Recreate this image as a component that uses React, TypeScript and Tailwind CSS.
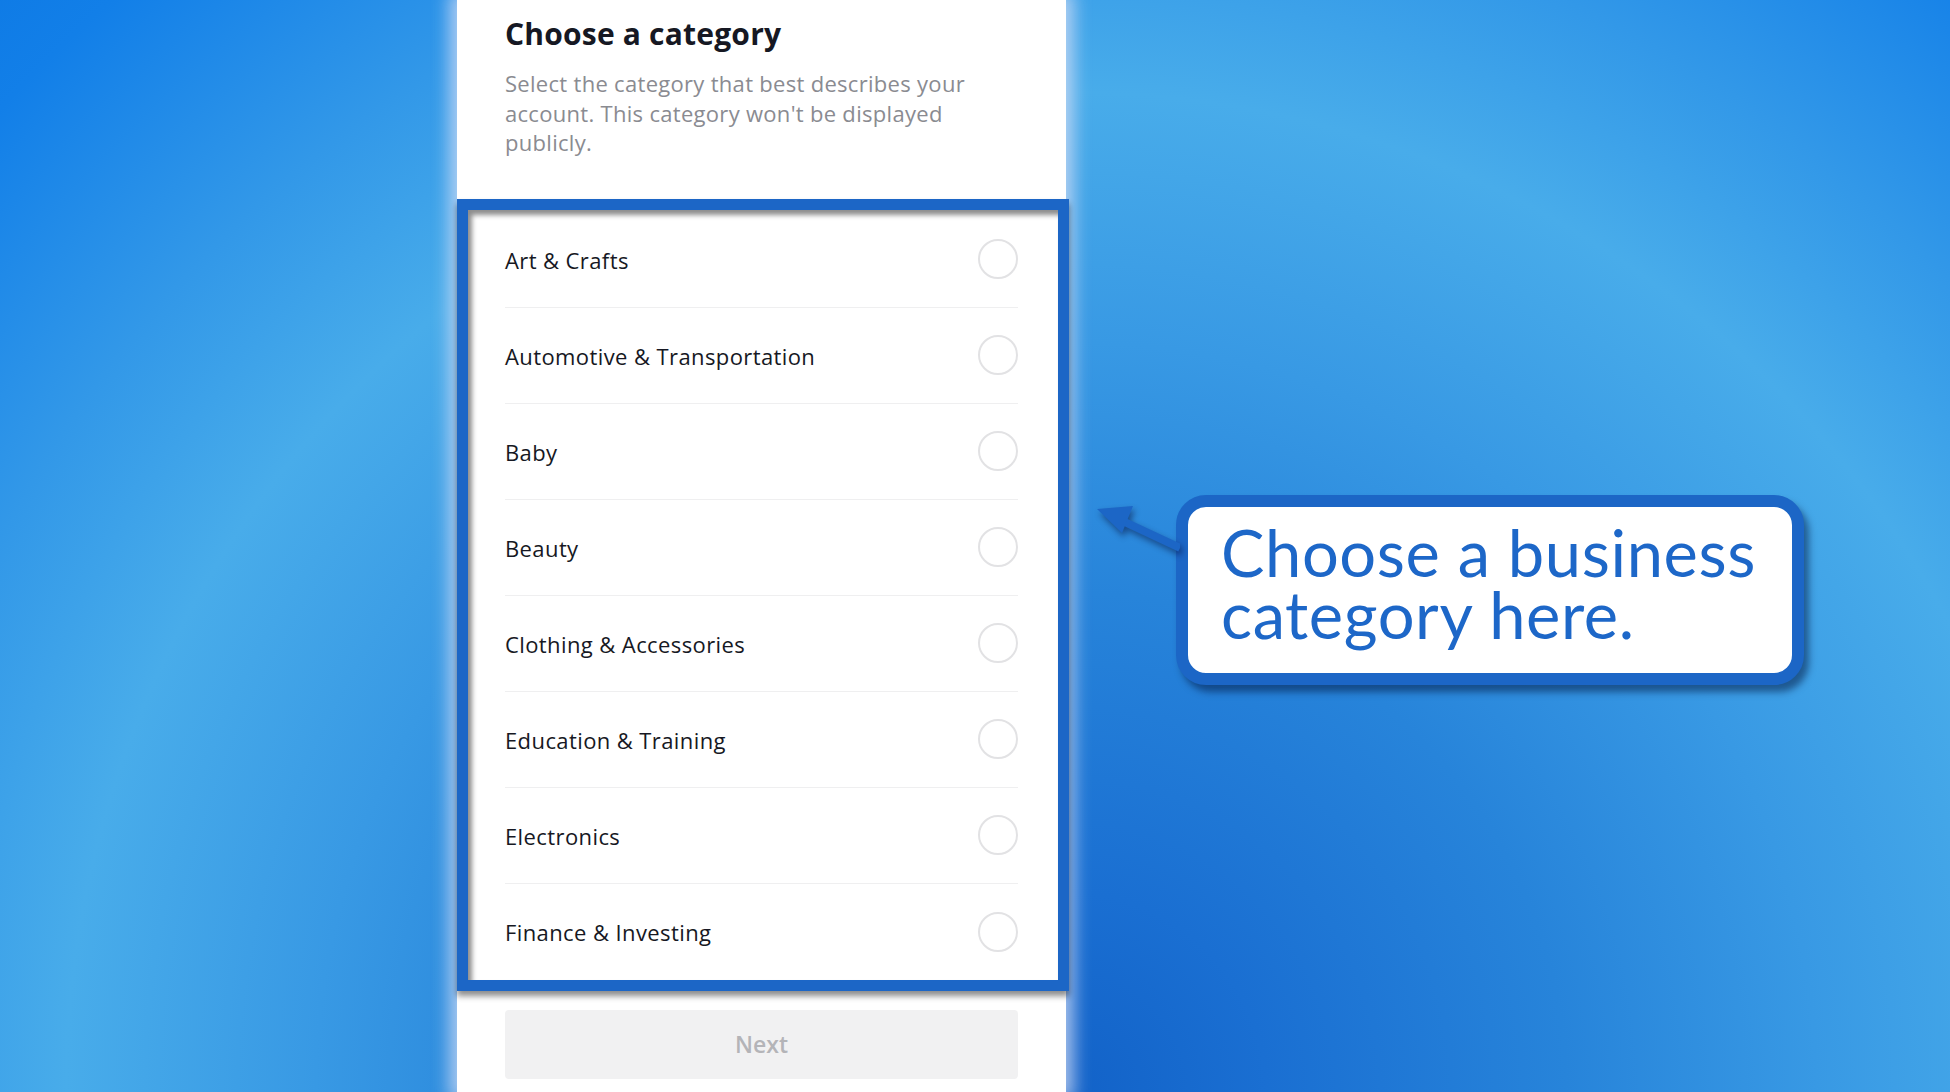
const categories = [
  'Art & Crafts',
  'Automotive & Transportation',
  'Baby',
  'Beauty',
  'Clothing & Accessories',
  'Education & Training',
  'Electronics',
  'Finance & Investing',
];

function CategoryRow({ label, last }: { label: string; last: boolean }) {
  return (
    <div className={`flex h-[96px] items-center justify-between ${last ? '' : 'border-b border-[#efeff0]'}`}>
      <span className="pt-[2px] text-[22px] tracking-[0.4px] text-[#161823]">{label}</span>
      <span className="h-[40px] w-[40px] rounded-full border-2 border-[#e2e2e4]" />
    </div>
  );
}

function Arrow() {
  return (
    <svg width="90" height="56" viewBox="0 0 90 56" className="mt-[3px] shrink-0 drop-shadow-[2px_4px_3px_rgba(0,0,40,0.45)]">
      <line x1="24" y1="19" x2="90" y2="50" stroke="#1c66c6" strokeWidth="8" />
      <polygon points="7,11 43,8 32,35" fill="#1c66c6" />
    </svg>
  );
}

export default function App() {
  return (
    <div className="flex h-[1092px] w-[1950px] overflow-hidden bg-[radial-gradient(circle_at_1066px_1092px,#1262c8_0px,#1a6fd2_200px,#2784da_500px,#3899e4_750px,#48acea_1000px,#3298e8_1200px,#127fe8_1450px,#0c78e4_1600px)] font-['Open_Sans',sans-serif]">
      <div className="w-[457px] shrink-0" />

      <div className="relative z-10 flex w-[609px] shrink-0 flex-col bg-white shadow-[0_0_16px_8px_rgba(214,222,246,0.75)]">
        <div className="px-[48px] pt-[16px]">
          <h1 className="text-[30px] font-bold leading-[36px] tracking-[0.2px] text-[#161823]">Choose a category</h1>
          <p className="mt-[17px] text-[22px] leading-[29.5px] tracking-[0.3px] text-[#8a8b91]">
            Select the category that best describes your account. This category won't be displayed publicly.
          </p>
        </div>

        <div className="mt-[41px] w-[612px] border-[11px] border-[#1c66c6] bg-white pl-[37px] pr-[40px] pt-[2px] shadow-[inset_4px_5px_5px_rgba(0,0,0,0.45),0_5px_6px_rgba(0,0,0,0.45)]">
          {categories.map((c, i) => (
            <CategoryRow key={c} label={c} last={i === categories.length - 1} />
          ))}
        </div>

        <div className="px-[48px] pt-[19px]">
          <button className="flex h-[69px] w-full items-center justify-center rounded-[4px] bg-[#f1f1f2] text-[23px] font-semibold text-[#b4b4b8]">
            Next
          </button>
        </div>
      </div>

      <div className="flex flex-1 items-start pl-[24px] pt-[495px]">
        <Arrow />
        <div className="-ml-[4px] w-[628px] rounded-[30px] border-[12px] border-[#1c66c6] bg-white pb-[28px] pl-[33px] pt-[14px] shadow-[5px_7px_7px_rgba(0,20,60,0.5)]">
          <p className="font-['Lato',sans-serif] text-[65px] leading-[62px] tracking-[0.6px] text-[#1d67c8]">
            Choose a business
            <br />
            category here.
          </p>
        </div>
      </div>
    </div>
  );
}
